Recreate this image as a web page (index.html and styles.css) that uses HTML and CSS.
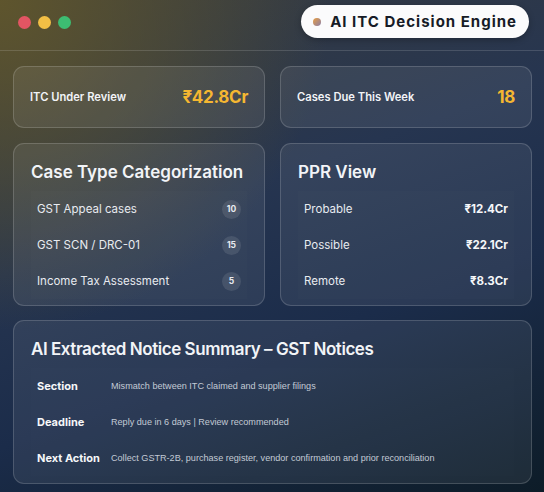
FILE: index.html
```html
<!DOCTYPE html>
<html lang="en">
<head>
  <meta charset="UTF-8">
  <meta name="viewport" content="width=device-width, initial-scale=1.0">
  <title>AI ITC Decision Engine</title>
  <link rel="stylesheet" href="styles.css">
</head>
<body>
  <div class="app">
    <div class="topbar">
      <div class="dots">
        <span class="dot red"></span>
        <span class="dot yellow"></span>
        <span class="dot green"></span>
      </div>
      <div class="pill"><span class="pill-dot"></span>AI ITC Decision Engine</div>
    </div>

    <div class="grid">
      <div class="card stat">
        <span class="stat-label">ITC Under Review</span>
        <span class="stat-value">₹42.8Cr</span>
      </div>
      <div class="card stat">
        <span class="stat-label">Cases Due This Week</span>
        <span class="stat-value">18</span>
      </div>

      <div class="card panel">
        <h3>Case Type Categorization</h3>
        <div class="row"><span>GST Appeal cases</span><span class="badge">10</span></div>
        <div class="row"><span>GST SCN / DRC-01</span><span class="badge">15</span></div>
        <div class="row"><span>Income Tax Assessment</span><span class="badge">5</span></div>
      </div>
      <div class="card panel">
        <h3>PPR View</h3>
        <div class="row"><span>Probable</span><strong>₹12.4Cr</strong></div>
        <div class="row"><span>Possible</span><strong>₹22.1Cr</strong></div>
        <div class="row"><span>Remote</span><strong>₹8.3Cr</strong></div>
      </div>
    </div>

    <div class="card panel summary">
      <h3>AI Extracted Notice Summary – GST Notices</h3>
      <div class="row"><span class="key">Section</span><span class="val">Mismatch between ITC claimed and supplier filings</span></div>
      <div class="row"><span class="key">Deadline</span><span class="val">Reply due in 6 days | Review recommended</span></div>
      <div class="row"><span class="key">Next Action</span><span class="val">Collect GSTR-2B, purchase register, vendor confirmation and prior reconciliation</span></div>
    </div>
  </div>
</body>
</html>
```

FILE: styles.css
```css
html, body {
  margin: 0;
  height: 100%;
}
body {
  font-family: Inter, "Open Sans", sans-serif;
  color: #f2f4f7;
  background:
    radial-gradient(circle at 0% 0%, rgba(96, 86, 44, 0.95) 0%, rgba(96, 86, 44, 0) 45%),
    linear-gradient(160deg, #3a3d3e 0%, #263550 40%, #1b2c4a 65%, #0d1c28 100%);
  overflow: hidden;
}
.app {
  padding: 0 12px 0 13px;
}
.topbar {
  height: 50px;
  display: flex;
  align-items: center;
  justify-content: space-between;
  border-bottom: 1px solid rgba(255, 255, 255, 0.14);
  margin: 0 -12px 0 -13px;
  padding: 0 15px 0 18px;
}
.dots {
  display: flex;
  gap: 7px;
  margin-top: -5px;
}
.dot {
  width: 13px;
  height: 13px;
  border-radius: 50%;
}
.red { background: #e25563; }
.yellow { background: #f2bf45; }
.green { background: #3dbd72; }
.pill {
  display: flex;
  align-items: center;
  gap: 9px;
  height: 33px;
  margin-top: -7px;
  padding: 0 12px 0 12px;
  background: #fbfbfc;
  border-radius: 17px;
  color: #161b26;
  font-weight: 700;
  font-size: 15px;
  letter-spacing: 1px;
  box-shadow: 0 2px 6px rgba(0, 0, 0, 0.25);
}
.pill-dot {
  width: 8px;
  height: 8px;
  border-radius: 50%;
  background: linear-gradient(135deg, #e89d42, #8a7fa8);
}
.grid {
  display: grid;
  grid-template-columns: 1fr 1fr;
  gap: 15px;
  margin-top: 15px;
}
.card {
  background: rgba(255, 255, 255, 0.07);
  border: 1px solid rgba(255, 255, 255, 0.16);
  border-radius: 11px;
  box-sizing: border-box;
}
.stat {
  height: 62px;
  display: flex;
  align-items: center;
  justify-content: space-between;
  padding: 0 16px;
}
.stat-label {
  font-size: 11.2px;
  font-weight: 600;
}
.stat-value {
  font-size: 17px;
  font-weight: 700;
  letter-spacing: -0.3px;
  color: #f5b731;
}
.panel {
  padding: 16px 17px 6px;
}
.panel h3 {
  margin: 0 0 7px;
  font-size: 17px;
  line-height: 24px;
  font-weight: 600;
}
.row {
  height: 36px;
  display: flex;
  align-items: center;
  justify-content: space-between;
  padding: 0 6px;
  font-size: 11.5px;
  background: rgba(255, 255, 255, 0.012);
  color: #e8ebf0;
}
.row strong {
  font-weight: 700;
  color: #f6f7f9;
}
.badge {
  width: 19px;
  height: 19px;
  border-radius: 50%;
  background: rgba(255, 255, 255, 0.1);
  display: flex;
  align-items: center;
  justify-content: center;
  font-size: 8.5px;
  font-weight: 700;
}
.summary {
  margin-top: 14px;
  height: 164px;
}
.summary h3 {
  letter-spacing: -0.45px;
}
.summary .row {
  justify-content: flex-start;
  background: rgba(255, 255, 255, 0.008);
}
.key {
  width: 74px;
  flex: none;
  font-size: 11px;
  font-weight: 700;
  color: #f6f7f9;
}
.val {
  font-family: "Liberation Sans", Arial, sans-serif;
  font-size: 9.1px;
  color: #c3cad5;
}
```
